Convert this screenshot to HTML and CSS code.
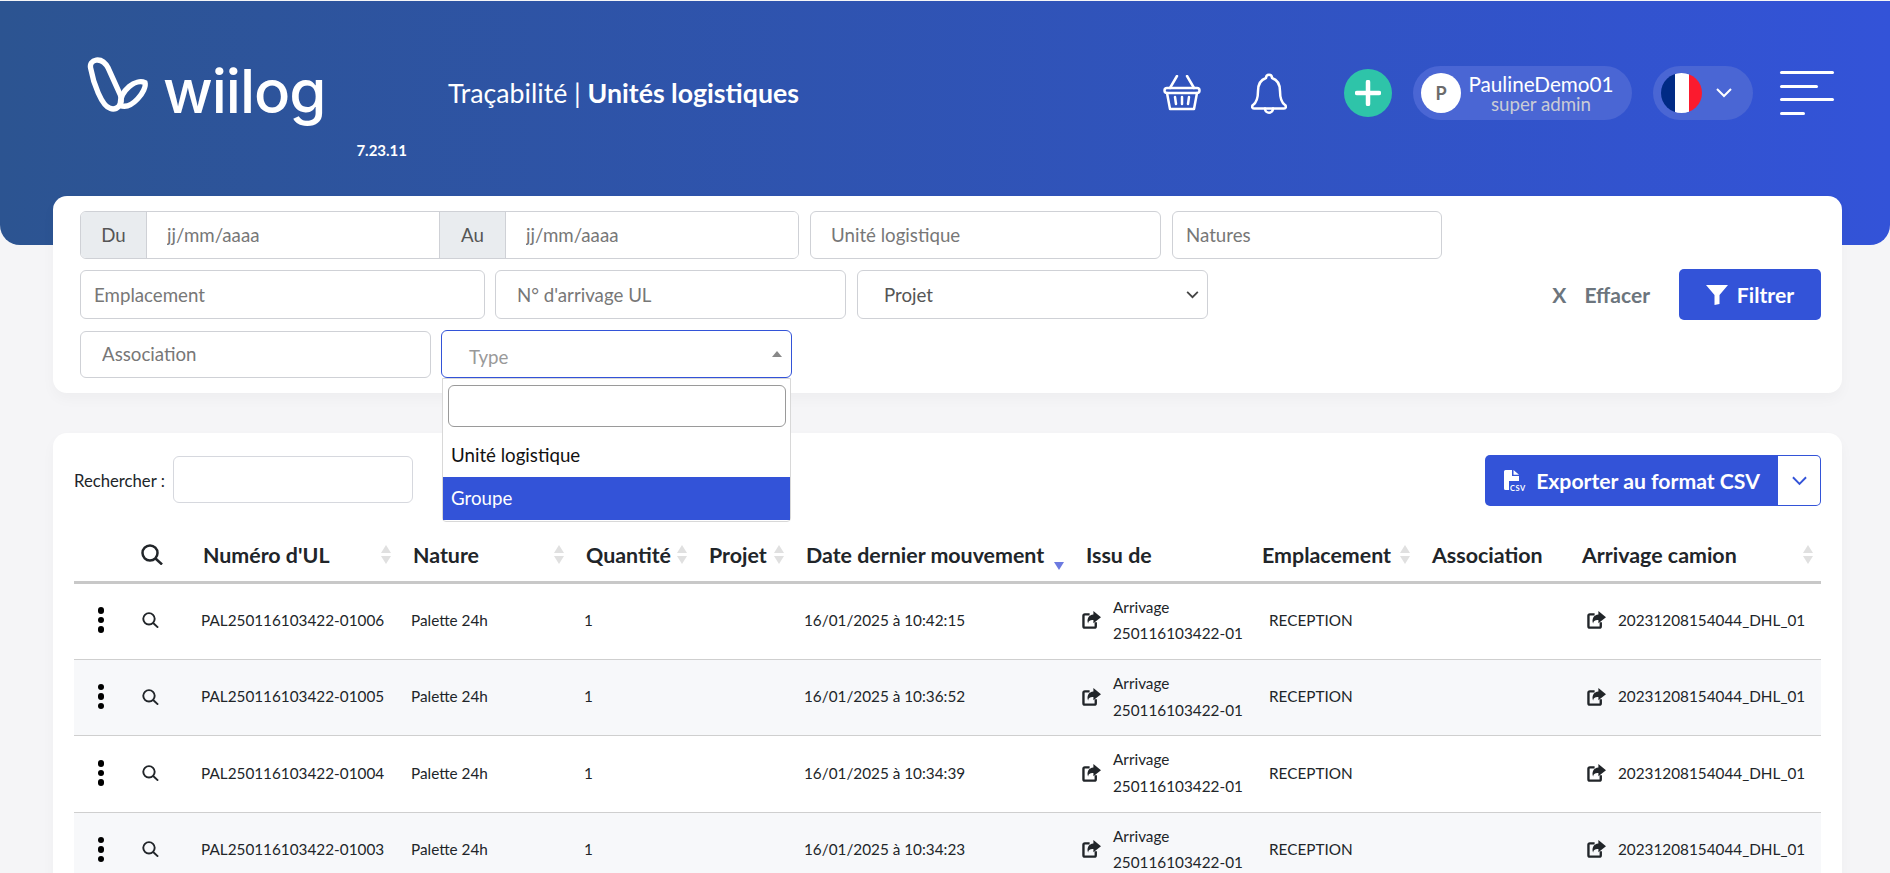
FILE: index.html
```html
<!DOCTYPE html>
<html>
    <head>
        <title>Unités logistiques</title>
        <link rel="stylesheet" href="styles.css">
    </head>
    <body>
        <header class="top-header">
            <div class="brand">
                <div class="logo">
                    <svg class="logo-mark" viewBox="0 0 270 225" width="90" height="75">
                        <path d="M62 85C55 58 95 46 115 85L151 165C162 195 138 212 120 205C95 197 70 130 62 85Z"/>
                        <path d="M150 196C185 212 232 150 225 128C198 115 150 150 150 196Z"/>
                    </svg>
                    <span class="logo-text">wiilog</span>
                </div>
                <p class="version">7.23.11</p>
            </div>
            <p class="page-title">Traçabilité | <b>Unités logistiques</b></p>
            <div class="header-actions">
                <svg class="icon-basket" viewBox="0 0 38 36" width="38" height="36">
                    <path d="M14 1L7 13M24 1L31 13"/>
                    <rect x="1.5" y="13" width="35" height="5" rx="2.5"/>
                    <path d="M4 18L7 34H31L34 18"/>
                    <path d="M12 22L13 29M19 22V29M26 22L25 29"/>
                </svg>
                <svg class="icon-bell" viewBox="0 0 36 41" width="36" height="41">
                    <path d="M15 5C15 0.5 21 0.5 21 5C27 7 29 12 29 18C29 26 31 30 34 32C35.500 33.500 35 35.500 33 35.500H3C1 35.500 0.500 33.500 2 32C5 30 7 26 7 18C7 12 9 7 15 5Z"/>
                    <path d="M14 35.500C14 41 22 41 22 35.500"/>
                </svg>
                <div class="plus-button">
                    <svg viewBox="0 0 26 26" width="26" height="26"><path d="M13 2V24M2 13H24"/></svg>
                </div>
                <div class="user-pill">
                    <span class="avatar">P</span>
                    <span class="user-text">
                        <span class="user-name">PaulineDemo01</span>
                        <span class="user-role">super admin</span>
                    </span>
                </div>
                <div class="lang-pill">
                    <span class="flag"><i class="flag-blue"></i><i class="flag-white"></i><i class="flag-red"></i></span>
                    <svg class="lang-chevron" viewBox="0 0 16 10" width="16" height="10"><path d="M1 1L8 8L15 1"/></svg>
                </div>
                <div class="menu-lines">
                    <i class="line-long"></i>
                    <i class="line-mid"></i>
                    <i class="line-long"></i>
                    <i class="line-short"></i>
                </div>
            </div>
        </header>

        <main class="page-content">
            <section class="card filter-card">
                <div class="filter-row">
                    <div class="date-group">
                        <span class="addon">Du</span>
                        <input class="date-input" placeholder="jj/mm/aaaa">
                        <span class="addon">Au</span>
                        <input class="date-input" placeholder="jj/mm/aaaa">
                    </div>
                    <input class="field field-ul" placeholder="Unité logistique">
                    <input class="field field-natures" placeholder="Natures">
                </div>
                <div class="filter-row">
                    <input class="field field-emplacement" placeholder="Emplacement">
                    <input class="field field-arrivage" placeholder="N° d'arrivage UL">
                    <div class="field field-projet">
                        <span>Projet</span>
                        <svg viewBox="0 0 14 9" width="13" height="8"><path d="M1 1L7 7L13 1"/></svg>
                    </div>
                    <div class="filter-buttons">
                        <span class="clear-button"><span>X</span><span>Effacer</span></span>
                        <button class="primary-button filter-button">
                            <svg viewBox="0 0 22 20" width="22" height="20"><path d="M0 0H22L13.500 10V19L8.500 20V10Z"/></svg>
                            Filtrer
                        </button>
                    </div>
                </div>
                <div class="filter-row">
                    <input class="field field-association" placeholder="Association">
                    <div class="type-select">
                        <span class="type-label">Type</span>
                        <i class="type-arrow"></i>
                        <div class="type-dropdown">
                            <input class="type-search">
                            <p class="type-option">Unité logistique</p>
                            <p class="type-option type-option-active">Groupe</p>
                        </div>
                    </div>
                </div>
            </section>

            <section class="card table-card">
                <div class="table-tools">
                    <label class="search-label">Rechercher :</label>
                    <input class="search-input">
                    <div class="export-group">
                        <button class="primary-button export-button">
                            <svg viewBox="0 0 24 22" width="24" height="22">
                                <path d="M1 1.500Q1 0 2.500 0H9V6H16V11H6V20H2.500Q1 20 1 18.500Z"/>
                                <path d="M10.500 0L16 4.800H10.500Z"/>
                                <text x="7" y="20.500" class="csv-text">CSV</text>
                            </svg>
                            Exporter au format CSV
                        </button>
                        <span class="export-toggle">
                            <svg viewBox="0 0 16 10" width="15" height="10"><path d="M1 1L8 8L15 1"/></svg>
                        </span>
                    </div>
                </div>

                <table class="data-table">
                    <colgroup>
                        <col class="col-actions"><col class="col-details"><col class="col-numero"><col class="col-nature">
                        <col class="col-quantite"><col class="col-projet"><col class="col-date"><col class="col-issu">
                        <col class="col-emplacement"><col class="col-association"><col class="col-camion">
                    </colgroup>
                    <thead>
                        <tr>
                            <th></th>
                            <th><svg class="search-icon search-icon-big" viewBox="0 0 22 21"><circle cx="9" cy="9" r="7.500"/><path d="M14.500 14.500L21 20.500"/></svg></th>
                            <th><span class="th-inner">Numéro d'UL<i class="sort"></i></span></th>
                            <th><span class="th-inner">Nature<i class="sort"></i></span></th>
                            <th><span class="th-inner">Quantité<i class="sort"></i></span></th>
                            <th><span class="th-inner">Projet<i class="sort"></i></span></th>
                            <th><span class="th-inner">Date dernier mouvement<i class="sort sort-desc"></i></span></th>
                            <th>Issu de</th>
                            <th><span class="th-inner">Emplacement<i class="sort"></i></span></th>
                            <th>Association</th>
                            <th><span class="th-inner th-camion">Arrivage camion<i class="sort"></i></span></th>
                        </tr>
                    </thead>
                    <tbody id="rows"></tbody>
                </table>
            </section>
        </main>

        <script>
            const dates = ['10:42:15', '10:36:52', '10:34:39', '10:34:23'];
            const shareIcon = `<svg class="share-icon" viewBox="0 0 20 19">
                <path class="share-box" d="M8 3.500H3Q1.500 3.500 1.500 5V16Q1.500 17.500 3 17.500H13Q14.500 17.500 14.500 16V12"/>
                <path class="share-arrow" d="M12 0L20 6.500L12 13V9.500C8 9.500 6.500 11 6.500 13.500C4.500 9 7 4 12 3.800Z"/>
            </svg>`;
            let html = '';
            dates.forEach(function(time, i){
                html += `<tr>
                    <td><span class="kebab"><i></i><i></i><i></i></span></td>
                    <td><svg class="search-icon" viewBox="0 0 22 21"><circle cx="9" cy="9" r="7.500"/><path d="M14.500 14.500L21 20.500"/></svg></td>
                    <td>PAL250116103422-0100${6 - i}</td>
                    <td>Palette 24h</td>
                    <td>1</td>
                    <td></td>
                    <td>16/01/2025 à ${time}</td>
                    <td><span class="link-cell">${shareIcon}<span>Arrivage<br>250116103422-01</span></span></td>
                    <td class="cell-emplacement">RECEPTION</td>
                    <td></td>
                    <td class="cell-camion"><span class="link-cell">${shareIcon}<span>20231208154044_DHL_01</span></span></td>
                </tr>`;
            });
            document.querySelector('#rows').innerHTML = html;
        </script>
    </body>
</html>
```

FILE: styles.css
```css
html, body{
    height:100%;
    overflow:hidden;
}
body{
    margin:0;
    padding-top:1px;
    box-sizing:border-box;
    background-color:#f5f5f7;
    font-family:"Lato", "Noto Sans", sans-serif;
    color:#212529;
}
p{
    margin:0;
}

/* header */
.top-header{
    height:244px;
    box-sizing:border-box;
    display:flex;
    align-items:flex-start;
    padding:0 56px 0 85px;
    background:linear-gradient(to right, #2c5491, #3353d8);
    border-radius:0 0 20px 20px;
    color:white;
}
.brand{
    width:322px;
    margin-top:50px;
    flex-shrink:0;
}
.logo{
    display:flex;
    align-items:flex-start;
    height:80px;
}
.logo-mark{
    margin:-11px 0 0 -15px;
    flex-shrink:0;
}
.logo-mark path{
    fill:none;
    stroke:white;
    stroke-width:16;
}
.logo-text{
    font-family:"Inter", sans-serif;
    font-size:60px;
    font-weight:500;
    line-height:70px;
    letter-spacing:-1px;
    margin:5px 0 0 3px;
}
.version{
    font-size:15px;
    font-weight:700;
    text-align:right;
    margin-top:10px;
}
.page-title{
    margin:75px 0 0 41px;
    font-size:26.700px;
    line-height:34px;
}
.header-actions{
    margin-left:auto;
    margin-top:65px;
    display:flex;
    align-items:center;
    height:54px;
}
.icon-basket path, .icon-basket rect, .icon-bell path{
    fill:none;
    stroke:white;
    stroke-width:2.5;
    stroke-linecap:round;
    stroke-linejoin:round;
}
.icon-bell{
    margin-left:50px;
}
.plus-button{
    width:48px;
    height:48px;
    margin-left:57px;
    border-radius:50%;
    background-color:#2ec4a9;
    display:flex;
    align-items:center;
    justify-content:center;
}
.plus-button path{
    fill:none;
    stroke:white;
    stroke-width:4.500;
    stroke-linecap:round;
}
.user-pill{
    width:219px;
    height:54px;
    margin-left:21px;
    box-sizing:border-box;
    padding-left:8px;
    display:flex;
    align-items:center;
    border-radius:27px;
    background-color:#4a66d4;
}
.avatar{
    width:40px;
    height:40px;
    border-radius:50%;
    background-color:white;
    color:#6b6b6b;
    font-size:18px;
    font-weight:700;
    display:flex;
    align-items:center;
    justify-content:center;
}
.user-text{
    width:160px;
    display:flex;
    flex-direction:column;
    align-items:center;
}
.user-name{
    font-size:20.700px;
    line-height:21px;
}
.user-role{
    font-size:18.700px;
    line-height:18px;
    color:#c9ccd6;
}
.lang-pill{
    width:100px;
    height:54px;
    margin-left:21px;
    box-sizing:border-box;
    padding-left:8px;
    display:flex;
    align-items:center;
    border-radius:27px;
    background-color:#4a66d4;
}
.flag{
    width:41px;
    height:40px;
    border-radius:50%;
    overflow:hidden;
    display:flex;
}
.flag i{
    display:block;
    height:100%;
}
.flag-blue{
    width:14px;
    background-color:#002a85;
}
.flag-white{
    width:14px;
    background-color:white;
}
.flag-red{
    width:13px;
    background-color:#fb1a2e;
}
.lang-chevron{
    margin-left:14px;
}
.lang-chevron path{
    fill:none;
    stroke:white;
    stroke-width:2;
}
.menu-lines{
    margin-left:27px;
    width:54px;
    display:flex;
    flex-direction:column;
    gap:10.500px;
}
.menu-lines i{
    display:block;
    height:3px;
    border-radius:2px;
    background-color:white;
}
.line-long{
    width:54px;
}
.line-mid{
    width:38px;
}
.line-short{
    width:25px;
}

/* cards */
.page-content{
    margin:-49px 48px 0 53px;
}
.card{
    background-color:white;
    border-radius:14px;
    box-shadow:0 6px 14px rgba(0, 0, 0, 0.03);
}

/* filters */
.filter-card{
    height:197px;
    box-sizing:border-box;
    padding:15px 21px 0 27px;
    display:flex;
    flex-direction:column;
    gap:11px;
    position:relative;
    z-index:2;
}
.filter-row{
    display:flex;
    align-items:center;
    gap:10px;
}
input, .field, .type-select{
    font-family:inherit;
    font-size:18.700px;
    color:#212529;
    box-sizing:border-box;
    outline:none;
}
input::placeholder{
    color:#777;
    opacity:1;
}
.field{
    height:48px;
    background-color:white;
    border:1px solid #cfd1d6;
    border-radius:6px;
}
.date-group{
    width:719px;
    height:48px;
    box-sizing:border-box;
    display:flex;
    border:1px solid #cfd1d6;
    border-radius:6px;
    overflow:hidden;
}
.addon{
    width:65px;
    flex-shrink:0;
    display:flex;
    align-items:center;
    justify-content:center;
    background-color:#e9ecef;
    color:#555;
    font-size:18.700px;
}
.date-input{
    flex:1;
    min-width:0;
    border:none;
    border-left:1px solid #cfd1d6;
    border-right:1px solid #cfd1d6;
    padding-left:20px;
}
.date-input:last-child{
    border-right:none;
}
.field-ul{
    width:351px;
    margin-left:1px;
    padding-left:20px;
}
.field-natures{
    width:270px;
    margin-left:1px;
    padding-left:13px;
}
.field-emplacement{
    width:405px;
    height:49px;
    padding-left:13px;
}
.field-arrivage{
    width:351px;
    height:49px;
    padding-left:21px;
}
.field-projet{
    width:351px;
    height:49px;
    margin-left:1px;
    padding:0 8px 0 26px;
    display:flex;
    align-items:center;
    justify-content:space-between;
    color:#555;
}
.field-projet path{
    fill:none;
    stroke:#444;
    stroke-width:2;
}
.filter-buttons{
    margin-left:auto;
    display:flex;
    align-items:center;
}
.clear-button{
    display:flex;
    gap:18px;
    font-size:21px;
    font-weight:700;
    color:#6c757d;
    margin-right:29px;
}
.primary-button{
    display:flex;
    align-items:center;
    justify-content:center;
    gap:9px;
    border:none;
    border-radius:5px;
    background-color:#3353d8;
    color:white;
    font-family:inherit;
    font-size:21.200px;
    font-weight:700;
    cursor:pointer;
}
.filter-button{
    width:142px;
    height:51px;
    margin:-1px 0;
}
.filter-button path{
    fill:white;
}
.field-association{
    width:351px;
    padding-left:21px;
    height:47px;
}
.type-select{
    width:351px;
    height:48px;
    border:1px solid #3353d8;
    border-radius:6px;
    position:relative;
    background-color:white;
}
.type-label{
    position:absolute;
    left:27px;
    top:15px;
    color:#999;
}
.type-arrow{
    position:absolute;
    right:9px;
    top:20px;
    border-left:5px solid transparent;
    border-right:5px solid transparent;
    border-bottom:6px solid #888;
}
.type-dropdown{
    position:absolute;
    left:0;
    right:0;
    top:47px;
    height:144px;
    box-sizing:border-box;
    padding-top:6px;
    background-color:white;
    border:1px solid #d8d8d8;
    border-radius:0 0 4px 4px;
}
.type-search{
    display:block;
    width:338px;
    height:42px;
    margin:0 0 7px 5px;
    border:1px solid #9a9a9a;
    border-radius:6px;
}
.type-option{
    height:43px;
    line-height:43px;
    padding-left:8px;
    font-size:18.700px;
    color:#111;
}
.type-option-active{
    background-color:#3353d8;
    color:white;
}

/* table */
.table-card{
    margin-top:40px;
    height:700px;
    box-sizing:border-box;
    padding:22px 21px 0;
}
.table-tools{
    display:flex;
    align-items:center;
    height:51px;
}
.search-label{
    font-size:16.700px;
    color:#212529;
}
.search-input{
    width:240px;
    height:47px;
    margin-left:8px;
    margin-top:-2px;
    border:1px solid #d6d8de;
    border-radius:6px;
}
.export-group{
    margin-left:auto;
    display:flex;
    height:51px;
}
.export-button{
    width:293px;
    height:51px;
    border-radius:5px 0 0 5px;
    gap:9px;
}
.export-button svg path{
    fill:white;
}
.csv-text{
    fill:white;
    font-family:"Lato", sans-serif;
    font-size:7.500px;
    font-weight:700;
    letter-spacing:0.5px;
}
.export-toggle{
    width:43px;
    box-sizing:border-box;
    display:flex;
    align-items:center;
    justify-content:center;
    border:1px solid #3353d8;
    border-left:none;
    border-radius:0 5px 5px 0;
}
.export-toggle path{
    fill:none;
    stroke:#3353d8;
    stroke-width:2;
}
.data-table{
    width:1747px;
    margin-top:19px;
    table-layout:fixed;
    border-collapse:collapse;
    font-size:15.300px;
}
.col-actions{ width:57px; }
.col-details{ width:62px; }
.col-numero{ width:210px; }
.col-nature{ width:173px; }
.col-quantite{ width:123px; }
.col-projet{ width:97px; }
.col-date{ width:280px; }
.col-issu{ width:176px; }
.col-emplacement{ width:170px; }
.col-association{ width:150px; }
.col-camion{ width:249px; }

.data-table th{
    height:57px;
    box-sizing:border-box;
    padding:6px 0 2px 10px;
    text-align:left;
    font-size:21.400px;
    font-weight:700;
    white-space:nowrap;
    border-bottom:3px solid #c8c8c8;
}
.th-inner{
    display:flex;
    align-items:center;
    justify-content:space-between;
    padding-right:11px;
}
.th-inner.th-camion{
    padding-right:7px;
}
.sort{
    width:11px;
    height:19px;
    flex-shrink:0;
    position:relative;
}
.sort::before, .sort::after{
    content:"";
    position:absolute;
    left:0;
    border-left:5.500px solid transparent;
    border-right:5.500px solid transparent;
}
.sort::before{
    top:0;
    border-bottom:8px solid #e0e0e0;
}
.sort::after{
    bottom:0;
    border-top:8px solid #e0e0e0;
}
.sort-desc::before{
    display:none;
}
.sort-desc::after{
    border-top-color:#6c7ae0;
    bottom:-6px;
}
.data-table td{
    padding:10px 8px 12px;
    line-height:26.700px;
    white-space:nowrap;
    border-bottom:1px solid #cfcfcf;
}
.data-table tbody tr:nth-child(even){
    background-color:#f7f8fa;
}
.data-table td.cell-emplacement{
    padding-left:17px;
}
.data-table td.cell-camion{
    padding-left:15px;
}
.kebab{
    display:flex;
    flex-direction:column;
    align-items:center;
    gap:3px;
    width:38px;
}
.kebab i{
    display:block;
    width:6.500px;
    height:6.500px;
    border-radius:50%;
    background-color:black;
}
.search-icon{
    display:block;
    width:17px;
    height:16px;
    margin-left:3px;
    fill:none;
    stroke:#212529;
    stroke-width:2.500;
}
.search-icon-big{
    width:22px;
    height:21px;
    margin-left:0;
}
.link-cell{
    display:flex;
    align-items:center;
}
.share-icon{
    width:19px;
    height:18px;
    flex-shrink:0;
    margin:0 12px 0 -2px;
}
.cell-camion .share-icon{
    margin:0 12px 0 0;
}
.share-box{
    fill:none;
    stroke:#212529;
    stroke-width:2.500;
}
.share-arrow{
    fill:#212529;
}
```
